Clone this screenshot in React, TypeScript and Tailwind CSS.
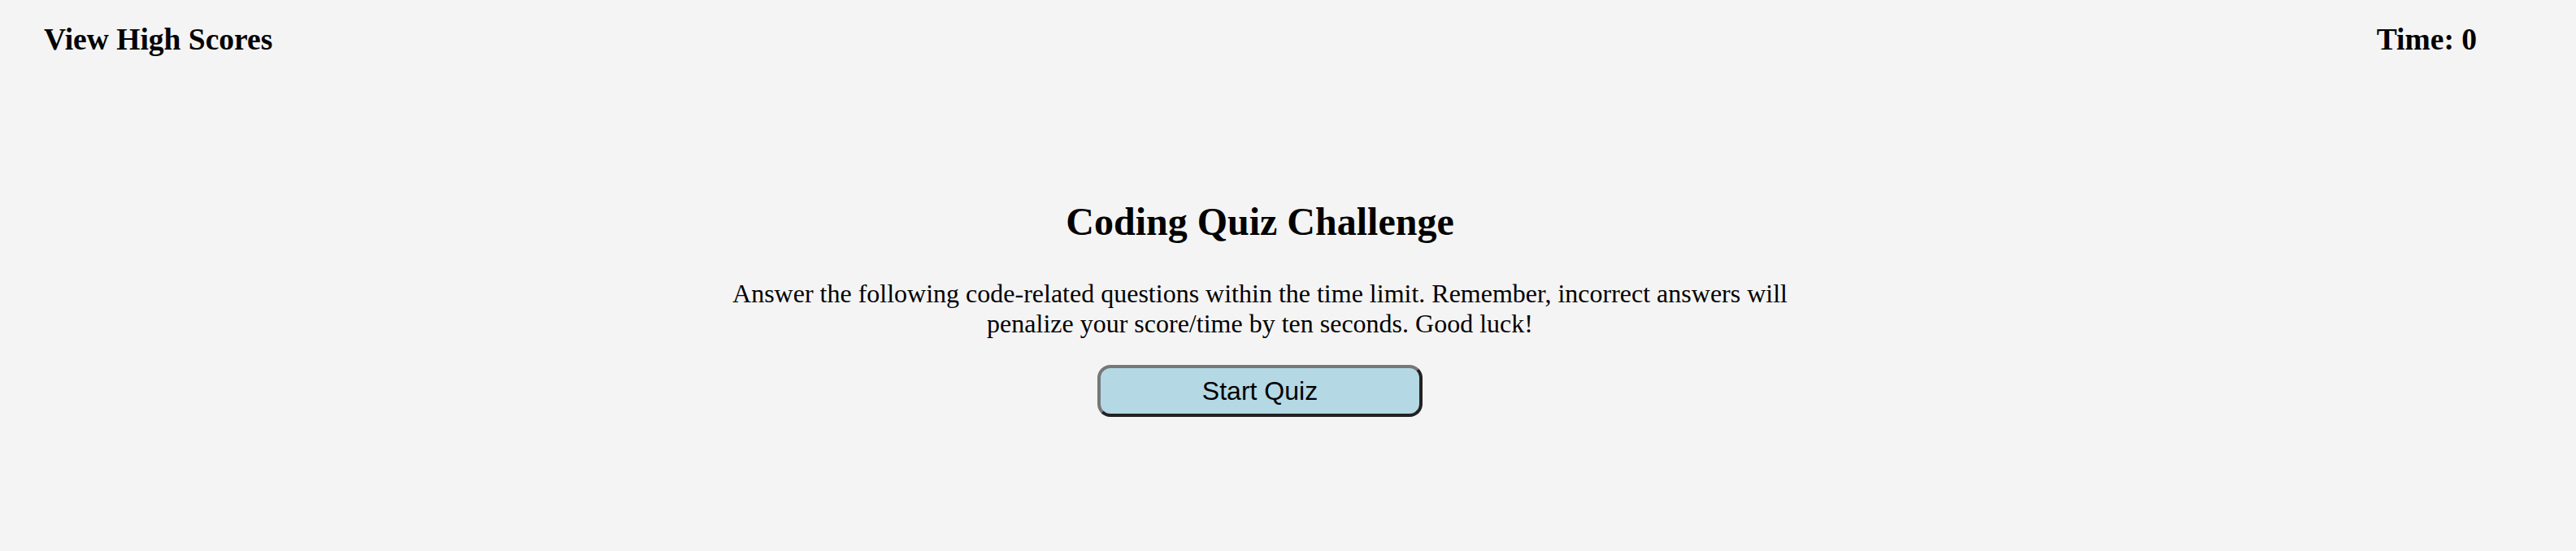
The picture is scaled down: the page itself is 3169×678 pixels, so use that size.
export default function App() {
  return (
    <div className="min-h-screen bg-[#f4f4f4] text-black leading-[normal] font-['Liberation_Serif',serif]">
      {/* top bar */}
      <header className="flex justify-between pt-[27px] pl-[54px] pr-[122px]">
        <a className="text-[37.5px] font-bold cursor-pointer">View High Scores</a>
        <p className="text-[37.5px] font-bold">Time: 0</p>
      </header>

      {/* start screen */}
      <main className="flex flex-col items-center pt-[175px] pr-[69px] text-center">
        <h1 className="text-[48px] font-bold">Coding Quiz Challenge</h1>
        <p className="w-[1340px] mt-[43px] text-[32px]">
          Answer the following code-related questions within the time limit. Remember, incorrect answers will
          penalize your score/time by ten seconds. Good luck!
        </p>
        <button className="mt-[32px] w-[400px] h-[64px] rounded-[16px] border-4 border-t-[#777777] border-l-[#777777] border-r-[#222222] border-b-[#222222] bg-[#b4d8e4] text-[32px] font-['Liberation_Sans',sans-serif] leading-none">
          Start Quiz
        </button>
      </main>
    </div>
  )
}
